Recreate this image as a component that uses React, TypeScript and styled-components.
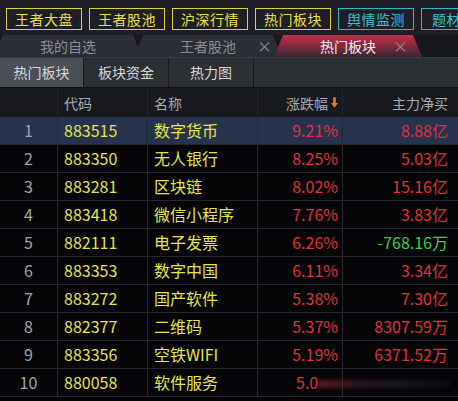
import React, { FC } from "react"
import styled, { createGlobalStyle } from "styled-components"

const GlobalStyle = createGlobalStyle`
  html, body {
    margin: 0;
    padding: 0;
    background: #050507;
    overflow: hidden;
  }
  body {
    font-family: "Noto Sans CJK SC", "Noto Sans", sans-serif;
  }
`

type Row = {
  code: string
  name: string
  pct: string
  flow: string
  down?: boolean
}

const ROWS: Row[] = [
  { code: "883515", name: "数字货币", pct: "9.21%", flow: "8.88亿" },
  { code: "883350", name: "无人银行", pct: "8.25%", flow: "5.03亿" },
  { code: "883281", name: "区块链", pct: "8.02%", flow: "15.16亿" },
  { code: "883418", name: "微信小程序", pct: "7.76%", flow: "3.83亿" },
  { code: "882111", name: "电子发票", pct: "6.26%", flow: "-768.16万", down: true },
  { code: "883353", name: "数字中国", pct: "6.11%", flow: "3.34亿" },
  { code: "883272", name: "国产软件", pct: "5.38%", flow: "7.30亿" },
  { code: "882377", name: "二维码", pct: "5.37%", flow: "8307.59万" },
  { code: "883356", name: "空铁WIFI", pct: "5.19%", flow: "6371.52万" },
  { code: "880058", name: "软件服务", pct: "5.0", flow: "" },
]

const TOP_BTNS: { label: string; cyan?: boolean }[] = [
  { label: "王者大盘" },
  { label: "王者股池" },
  { label: "沪深行情" },
  { label: "热门板块" },
  { label: "舆情监测", cyan: true },
  { label: "题材", cyan: true },
]

const COLS = "58px 90px 110px 85px 1fr"

const App: FC = (): JSX.Element => {
  return (
    <Page>
      <GlobalStyle />
      <TopBar>
        {TOP_BTNS.map((b, i) => (
          <TopBtn key={b.label} $cyan={b.cyan} $last={i === TOP_BTNS.length - 1}>
            {b.label}
          </TopBtn>
        ))}
      </TopBar>

      <TabBar>
        <Tab $first>我的自选</Tab>
        <Tab>
          王者股池
          <Close $r={10}>×</Close>
        </Tab>
        <Tab $active>
          热门板块
          <Close $r={14}>×</Close>
        </Tab>
      </TabBar>

      <SubTabs>
        <SubTab $active>热门板块</SubTab>
        <SubTab>板块资金</SubTab>
        <SubTab>热力图</SubTab>
      </SubTabs>

      <HeadRow>
        <HeadCell />
        <HeadCell>代码</HeadCell>
        <HeadCell>名称</HeadCell>
        <HeadCell $right>
          涨跌幅
          <SortArrow viewBox="0 0 8 12">
            <path d="M2.5 0h3v6.5H8L4 12 0 6.5h2.5z" fill="#e8782a" />
          </SortArrow>
        </HeadCell>
        <HeadCell $right>主力净买</HeadCell>
      </HeadRow>

      <Body>
        {ROWS.map((r, i) => (
          <DataRow key={r.code} $sel={i === 0}>
            <NumCell>{i + 1}</NumCell>
            <CodeCell>{r.code}</CodeCell>
            <NameCell>{r.name}</NameCell>
            <ValCell $lead={r.flow === ""}>{r.pct}</ValCell>
            <ValCell $down={r.down}>{r.flow}</ValCell>
          </DataRow>
        ))}
        <Smudge />
      </Body>
    </Page>
  )
}

const Page = styled.div`
  width: 458px;
  height: 401px;
  overflow: hidden;
  display: flex;
  flex-direction: column;
  background: #050507;
`

const TopBar = styled.div`
  height: 35px;
  box-sizing: border-box;
  padding: 8px 0 0 6px;
  display: flex;
  gap: 7px;
  background: #1f1e27;
  white-space: nowrap;
  overflow: hidden;
`

const TopBtn = styled.div<{ $cyan?: boolean; $last?: boolean }>`
  flex: 0 0 auto;
  width: 76px;
  height: 22px;
  box-sizing: border-box;
  border: 1px solid ${(p) => (p.$cyan ? "#2fb6c8" : "#d9d634")};
  color: ${(p) => (p.$cyan ? "#35c0d2" : "#e6e33c")};
  font-size: 14px;
  line-height: 20px;
  text-align: ${(p) => (p.$last ? "left" : "center")};
  padding-left: ${(p) => (p.$last ? "10px" : "0")};
  letter-spacing: 0.5px;
`

const TabBar = styled.div`
  height: 22px;
  display: flex;
  background: #17181d;
  overflow: hidden;
`

const Tab = styled.div<{ $active?: boolean; $first?: boolean }>`
  position: relative;
  flex: 0 0 auto;
  width: 148px;
  margin-left: ${(p) => (p.$first ? "-6px" : "-8px")};
  clip-path: polygon(9px 0, calc(100% - 9px) 0, 100% 100%, 0 100%);
  background: ${(p) =>
    p.$active
      ? "linear-gradient(180deg, #c42f4a 0%, #8a2a40 45%, #3a2431 100%)"
      : "#2b2e37"};
  color: ${(p) => (p.$active ? "#eeeeee" : "#8b8d93")};
  font-size: 14px;
  line-height: 22px;
  text-align: center;
`

const Close = styled.span<{ $r: number }>`
  position: absolute;
  right: ${(p) => p.$r}px;
  top: 0;
  font-size: 15px;
  color: #8a8c92;
  line-height: 21px;
`

const SubTabs = styled.div`
  height: 30px;
  display: flex;
  background: #2c2f34;
  border-top: 1px solid #3a3d43;
  box-sizing: border-box;
`

const SubTab = styled.div<{ $active?: boolean }>`
  width: 85px;
  border-right: 1px solid #17181b;
  box-sizing: border-box;
  background: ${(p) => (p.$active ? "#4a4f56" : "transparent")};
  color: #d6d7d9;
  font-size: 14px;
  line-height: 29px;
  text-align: center;
  &:first-child {
    width: 84px;
  }
`

const HeadRow = styled.div`
  height: 30px;
  display: grid;
  grid-template-columns: ${COLS};
  background: #17191e;
  border-top: 1px solid #0e0f12;
  box-sizing: border-box;
`

const HeadCell = styled.div<{ $right?: boolean }>`
  display: flex;
  align-items: center;
  justify-content: ${(p) => (p.$right ? "flex-end" : "flex-start")};
  gap: 3px;
  padding: ${(p) => (p.$right ? "0 10px 0 0" : "0 0 0 6px")};
  border-right: 1px solid #24262b;
  color: #a9abaf;
  font-size: 14px;
  &:last-child {
    border-right: none;
  }
`

const SortArrow = styled.svg`
  width: 7px;
  height: 11px;
  margin-right: -6px;
`

const Body = styled.div`
  position: relative;
  flex: 1;
`

const DataRow = styled.div<{ $sel?: boolean }>`
  height: 28px;
  display: grid;
  grid-template-columns: ${COLS};
  box-sizing: border-box;
  border-bottom: 1px solid #26272b;
  background: ${(p) => (p.$sel ? "#27324c" : "#050507")};
  font-size: 16px;
  line-height: 27px;
  & > div {
    border-right: 1px solid #26272b;
  }
  & > div:last-child {
    border-right: none;
  }
`

const NumCell = styled.div`
  text-align: center;
  color: #a3a5aa;
`

const CodeCell = styled.div`
  padding-left: 6px;
  color: #e4e24a;
`

const NameCell = styled.div`
  padding-left: 6px;
  color: #e6e44a;
  white-space: nowrap;
  overflow: hidden;
`

const ValCell = styled.div<{ $down?: boolean; $lead?: boolean }>`
  text-align: ${(p) => (p.$lead ? "left" : "right")};
  padding-right: 4px;
  padding-left: ${(p) => (p.$lead ? "38px" : "0")};
  color: ${(p) => (p.$down ? "#3ccf46" : "#e0303c")};
  white-space: nowrap;
  &:last-child {
    padding-right: 10px;
  }
`

/* watermark streak lying over the last row */
const Smudge = styled.div`
  position: absolute;
  left: 317px;
  top: 263px;
  width: 134px;
  height: 8px;
  border-radius: 4px;
  background: linear-gradient(
    90deg,
    rgba(170, 40, 60, 0.55) 0%,
    rgba(120, 60, 75, 0.3) 30%,
    rgba(110, 100, 110, 0.18) 65%,
    rgba(120, 120, 120, 0.06) 100%
  );
  filter: blur(2px);
`

export default App
